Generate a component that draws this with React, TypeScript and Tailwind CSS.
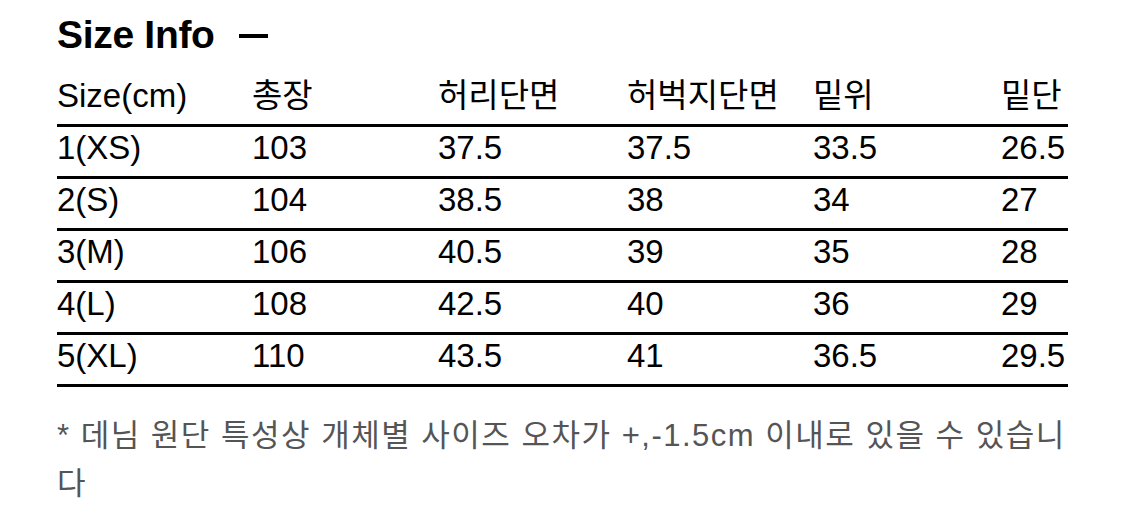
import React from "react";

const headers = ["총장", "허리단면", "허벅지단면", "밑위", "밑단"];

const rows: string[][] = [
  ["1(XS)", "103", "37.5", "37.5", "33.5", "26.5"],
  ["2(S)", "104", "38.5", "38", "34", "27"],
  ["3(M)", "106", "40.5", "39", "35", "28"],
  ["4(L)", "108", "42.5", "40", "36", "29"],
  ["5(XL)", "110", "43.5", "41", "36.5", "29.5"],
];

const cols = "grid grid-cols-[195px_186px_189px_186px_188px_1fr]";

const App = () => {
  return (
    <div className="min-h-screen bg-white px-[57px] pt-4 font-['Liberation_Sans','Noto_Sans_CJK_KR',sans-serif] text-black">
      <div className="flex items-center gap-[24px] mb-[21px]">
        <h2 className="text-[39px] leading-[38px] font-bold tracking-[-0.3px]">Size Info</h2>
        <span className="mt-[1px] block h-[4px] w-[29px] bg-black" />
      </div>

      <div className="text-[33px]">
        <div className={`${cols} border-b-[3px] border-black`}>
          <div className="leading-[41px] pb-2">Size(cm)</div>
          {headers.map((h) => (
            <div key={h} className="leading-[41px] pb-2">
              {h}
            </div>
          ))}
        </div>
        {rows.map((r) => (
          <div key={r[0]} className={`${cols} border-b-[3px] border-black`}>
            {r.map((c, i) => (
              <div key={i} className="leading-[41px] pb-2">
                {c}
              </div>
            ))}
          </div>
        ))}
      </div>

      <p className="mt-[25px] text-[31px] leading-[48px] tracking-[1.5px] text-[#555555]">
        * 데님 원단 특성상 개체별 사이즈 오차가 +,-1.5cm 이내로 있을 수 있습니다
      </p>
    </div>
  );
};

export default App;
